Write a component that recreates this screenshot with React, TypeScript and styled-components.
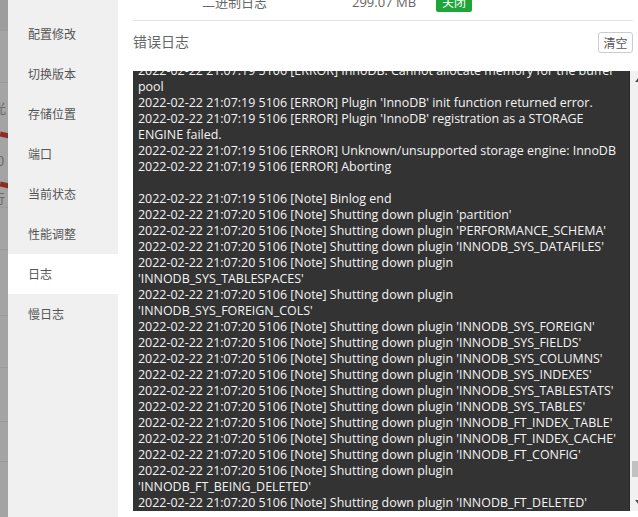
import React from "react";
import styled, { createGlobalStyle } from "styled-components";

const GlobalStyle = createGlobalStyle`
  html, body { margin: 0; padding: 0; background: #fff; overflow: hidden; }
  body { font-family: "Open Sans", "Noto Sans CJK SC", sans-serif; }
  * { box-sizing: border-box; }
`;

const Page = styled.div`
  display: flex;
  width: 638px;
  height: 517px;
  overflow: hidden;
  background: #fff;
`;

/* dimmed page behind the dialog */
const Backdrop = styled.div`
  width: 8px;
  flex: none;
  background: #a4a4a4;
  display: flex;
  flex-direction: column;
  overflow: hidden;
`;

const BackRow = styled.div<{ $h: number; $tone?: string }>`
  height: ${(p) => p.$h}px;
  flex: none;
  background: ${(p) => p.$tone || "transparent"};
  border-bottom: 1px solid #9a9a9a;
  display: flex;
  align-items: center;
  font-size: 13px;
  color: #6a6a6a;
  font-family: "Noto Sans CJK SC", sans-serif;
  white-space: nowrap;
`;

const BackGlyph = styled.span<{ $shift: number }>`
  margin-left: ${(p) => p.$shift}px;
`;

const RedMark = styled.div`
  height: 5px;
  width: 14px;
  background: #8e2b22;
  transform: rotate(12deg);
`;

const Sidebar = styled.nav`
  width: 110px;
  flex: none;
  background: #f0f0f0;
  padding-top: 14px;
  display: flex;
  flex-direction: column;
`;

const NavItem = styled.div<{ $active?: boolean }>`
  height: 40px;
  line-height: 40px;
  padding-left: 20px;
  font-family: "Noto Sans CJK SC", sans-serif;
  font-size: 12px;
  color: #555;
  background: ${(p) => (p.$active ? "#fff" : "transparent")};
`;

const Main = styled.main`
  flex: 1;
  min-width: 0;
  padding: 0 5px 0 15px;
  overflow: hidden;
  display: flex;
  flex-direction: column;
`;

const FileRow = styled.div`
  height: 41px;
  margin-top: -20px;
  padding-top: 3px;
  border-bottom: 1px solid #e4e4e4;
  display: grid;
  grid-template-columns: 150px 84px auto;
  align-items: center;
  padding-left: 69px;
  font-family: "Open Sans", "Noto Sans CJK SC", sans-serif;
  font-size: 13px;
  color: #666;
`;

const Badge = styled.span`
  justify-self: start;
  display: inline-flex;
  align-items: center;
  height: 20px;
  padding: 0 6px;
  border-radius: 2px;
  background: #20a53a;
  color: #fff;
  font-size: 12px;
  font-family: "Noto Sans CJK SC", sans-serif;
`;

const TitleBar = styled.div`
  margin-top: 11px;
  height: 21px;
  display: flex;
  align-items: center;
  justify-content: space-between;
`;

const Title = styled.span`
  font-family: "Noto Sans CJK SC", sans-serif;
  font-size: 14px;
  line-height: 16px;
  color: #666;
  padding-bottom: 3px;
`;

const Button = styled.button`
  height: 21px;
  width: 35px;
  padding: 0;
  border: 1px solid #ccc;
  border-radius: 3px;
  background: #fff;
  color: #555;
  font-family: "Noto Sans CJK SC", sans-serif;
  font-size: 12px;
  line-height: 19px;
  cursor: pointer;
`;

const LogBox = styled.div`
  margin-top: 18px;
  margin-right: -14px;
  height: 440px;
  display: flex;
  flex: none;
`;

const LogText = styled.div`
  flex: 1;
  min-width: 0;
  background: #333;
  overflow: hidden;
  padding: 0 5px;
  border-right: 1px solid #2a2a2a;
`;

const LogLines = styled.div<{ $offset: number }>`
  margin-top: ${(p) => -p.$offset}px;
  color: #f4f4f4;
  font-family: "Open Sans", sans-serif;
  font-size: 12.45px;
  line-height: 16px;
`;

const LogLine = styled.div`
  height: 16px;
  white-space: pre;
`;

const ScrollTrack = styled.div`
  width: 17px;
  flex: none;
  background: #f1f1f1;
  display: flex;
  flex-direction: column;
`;

const ArrowBtn = styled.div`
  height: 17px;
  flex: none;
  display: flex;
  align-items: center;
  justify-content: center;
`;

const Rail = styled.div`
  flex: 1;
  display: flex;
  flex-direction: column;
  padding: 0 2px;
`;

const Thumb = styled.div`
  height: 16px;
  background: #c1c1c1;
  flex: none;
`;

const navItems = ["配置修改", "切换版本", "存储位置", "端口", "当前状态", "性能调整", "日志", "慢日志"];

const t19 = "2022-02-22 21:07:19 5106 ";
const t20 = "2022-02-22 21:07:20 5106 [Note] Shutting down plugin ";

const lines = [
  t19 + "[ERROR] InnoDB: Cannot allocate memory for the buffer",
  "pool",
  t19 + "[ERROR] Plugin 'InnoDB' init function returned error.",
  t19 + "[ERROR] Plugin 'InnoDB' registration as a STORAGE",
  "ENGINE failed.",
  t19 + "[ERROR] Unknown/unsupported storage engine: InnoDB",
  t19 + "[ERROR] Aborting",
  "",
  t19 + "[Note] Binlog end",
  t20 + "'partition'",
  t20 + "'PERFORMANCE_SCHEMA'",
  t20 + "'INNODB_SYS_DATAFILES'",
  t20.trimEnd(),
  "'INNODB_SYS_TABLESPACES'",
  t20.trimEnd(),
  "'INNODB_SYS_FOREIGN_COLS'",
  t20 + "'INNODB_SYS_FOREIGN'",
  t20 + "'INNODB_SYS_FIELDS'",
  t20 + "'INNODB_SYS_COLUMNS'",
  t20 + "'INNODB_SYS_INDEXES'",
  t20 + "'INNODB_SYS_TABLESTATS'",
  t20 + "'INNODB_SYS_TABLES'",
  t20 + "'INNODB_FT_INDEX_TABLE'",
  t20 + "'INNODB_FT_INDEX_CACHE'",
  t20 + "'INNODB_FT_CONFIG'",
  t20.trimEnd(),
  "'INNODB_FT_BEING_DELETED'",
  t20 + "'INNODB_FT_DELETED'",
  t20 + "'INNODB_FT_DEFAULT_STOPWORD'",
];

const Tri = ({ up }: { up?: boolean }) => (
  <svg width="8" height="5" viewBox="0 0 8 5">
    <path d={up ? "M0 5 L4 0 L8 5 Z" : "M0 0 L4 5 L8 0 Z"} fill="#505050" />
  </svg>
);

export default function App() {
  const railLength = 440 - 34 - 16;
  const scrollFraction = 0.957;
  return (
    <>
      <GlobalStyle />
      <Page>
        <Backdrop>
          <BackRow $h={31} $tone="#9d9d9d" />
          <BackRow $h={52} />
          <BackRow $h={50}>
            <BackGlyph $shift={-7}>光</BackGlyph>
          </BackRow>
          <RedMark />
          <BackRow $h={45}>
            <BackGlyph $shift={-3}>0</BackGlyph>
          </BackRow>
          <RedMark />
          <BackRow $h={20}>
            <BackGlyph $shift={-8}>行</BackGlyph>
          </BackRow>
          <BackRow $h={42} />
          <BackRow $h={66} />
          <BackRow $h={52} />
          <BackRow $h={54} />
          <BackRow $h={40} />
        </Backdrop>
        <Sidebar>
          {navItems.map((n) => (
            <NavItem key={n} $active={n === "日志"}>
              {n}
            </NavItem>
          ))}
        </Sidebar>
        <Main>
          <FileRow>
            <span>二进制日志</span>
            <span>299.07 MB</span>
            <Badge>关闭</Badge>
          </FileRow>
          <TitleBar>
            <Title>错误日志</Title>
            <Button>清空</Button>
          </TitleBar>
          <LogBox>
            <LogText>
              <LogLines $offset={8}>
                {lines.map((l, i) => (
                  <LogLine key={i}>{l}</LogLine>
                ))}
              </LogLines>
            </LogText>
            <ScrollTrack>
              <ArrowBtn>
                <Tri up />
              </ArrowBtn>
              <Rail>
                <Thumb style={{ marginTop: Math.round(railLength * scrollFraction) }} />
              </Rail>
              <ArrowBtn>
                <Tri />
              </ArrowBtn>
            </ScrollTrack>
          </LogBox>
        </Main>
      </Page>
    </>
  );
}
